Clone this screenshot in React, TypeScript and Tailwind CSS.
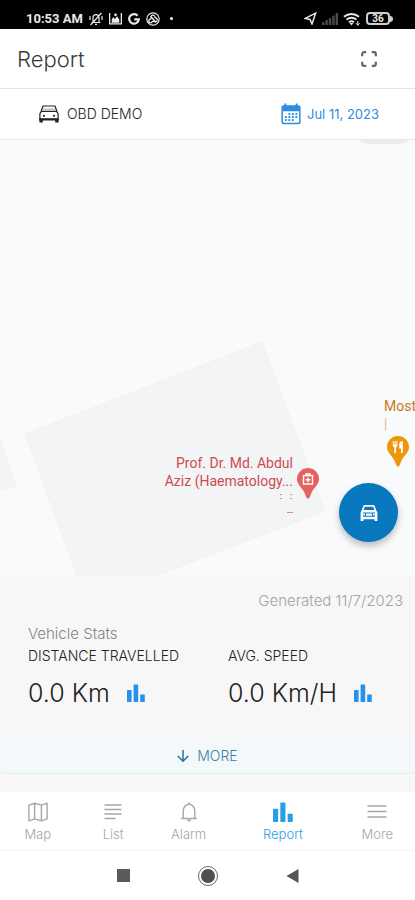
import React from 'react'

type IconProps = { className?: string }

const BarsIcon = ({ className }: IconProps) => (
  <svg viewBox="0 0 18 18" className={className} fill="currentColor" aria-hidden="true">
    <rect x="0" y="6" width="4.6" height="12" rx="0.6" />
    <rect x="6.6" y="0.5" width="4.6" height="17.5" rx="0.6" />
    <rect x="13.2" y="10.5" width="4.6" height="7.5" rx="0.6" />
  </svg>
)

const CarIcon = ({ className }: IconProps) => (
  <svg viewBox="0 0 20 18" className={className} fill="none" stroke="currentColor" aria-hidden="true">
    <path d="M2 6.600 4 1h12l2 5.600" strokeWidth="1.2" strokeLinejoin="round" />
    <path d="M3.600 4.200h12.800" strokeWidth="0.7" opacity="0.6" />
    <path d="M0.900 15V8.600l1.600-2.200h15l1.600 2.200V15z" strokeWidth="1.2" strokeLinejoin="round" />
    <path d="M0.400 14.100h19.200" strokeWidth="1.8" />
    <path d="M0.400 14h3.400v3.600H0.400zM16.200 14h3.400v3.600h-3.400z" fill="currentColor" stroke="none" />
    <circle cx="5" cy="10.800" r="1.1" fill="currentColor" stroke="none" />
    <circle cx="15" cy="10.800" r="1.1" fill="currentColor" stroke="none" />
  </svg>
)

const CarSolidIcon = ({ className }: IconProps) => (
  <svg viewBox="0 0 18 16" className={className} fill="currentColor" aria-hidden="true">
    <path
      fillRule="evenodd"
      d="M3.6 0.6Q3.9 0 4.6 0h8.8q0.7 0 1 0.6L16.6 6q0.8 0.8 0.8 2v8h-2.8v-1.8H3.4V16H0.6V8q0-1.2 0.8-2zM4.8 1.8 3.6 5h10.8l-1.2-3.2zM3 7.600v4.200h12V7.600z"
    />
    <path d="M3.200 8.400h1.800v2H3.200zM13 8.400h1.800v2H13zM6 8.400h6v2.400H6z" />
  </svg>
)

const CalendarIcon = ({ className }: IconProps) => (
  <svg viewBox="0 0 20 22" className={className} fill="currentColor" aria-hidden="true">
    <path
      fillRule="evenodd"
      d="M3.4 0.5h2V2.3h9.2V0.5h2V2.3h0.8A2.2 2.2 0 0 1 19.6 4.5V19a2.2 2.2 0 0 1-2.2 2.2H2.6A2.2 2.2 0 0 1 0.4 19V4.5A2.2 2.2 0 0 1 2.6 2.3h0.8zM1.9 8.2V18.6a1.2 1.2 0 0 0 1.2 1.2h13.8a1.2 1.2 0 0 0 1.2-1.2V8.2z"
    />
    {[11, 14, 17].map((y) =>
      [4.8, 8.3, 11.8, 15.3].map((x) =>
        (y === 11 && x === 4.8) || (y === 17 && x === 15.3) ? null : (
          <rect key={`${x}-${y}`} x={x - 0.9} y={y - 0.9} width="1.9" height="1.9" />
        ),
      ),
    )}
  </svg>
)

const FullscreenIcon = ({ className }: IconProps) => (
  <svg viewBox="0 0 16 16" className={className} fill="none" stroke="currentColor" strokeWidth="2.2" aria-hidden="true">
    <path d="M1.2 5.2V3a1.8 1.8 0 0 1 1.8-1.8h2.2M10.800 1.2H13A1.8 1.8 0 0 1 14.8 3v2.2M14.8 10.800V13a1.8 1.8 0 0 1-1.8 1.8h-2.2M5.2 14.8H3A1.8 1.8 0 0 1 1.2 13v-2.2" />
  </svg>
)

const ArrowDownIcon = ({ className }: IconProps) => (
  <svg viewBox="0 0 12 12" className={className} fill="none" stroke="currentColor" strokeWidth="1.5" aria-hidden="true">
    <path d="M6 0v11M0.8 6 6 11.2 11.2 6" />
  </svg>
)

const MapIcon = ({ className }: IconProps) => (
  <svg viewBox="0 0 20 20" className={className} fill="none" stroke="currentColor" strokeWidth="1.4" strokeLinejoin="round" aria-hidden="true">
    <path d="M0.900 3.200 6.600 1.200 13.400 3.200 19.100 1.200V16.800L13.400 18.800 6.600 16.800 0.900 18.800zM6.600 1.200V16.800M13.400 3.200V18.800" />
  </svg>
)

const ListIcon = ({ className }: IconProps) => (
  <svg viewBox="0 0 20 20" className={className} stroke="currentColor" strokeWidth="1.5" aria-hidden="true">
    <path d="M1.5 3h17M1.5 7.5h17M1.5 12h17M1.5 16.5h11" />
  </svg>
)

const BellIcon = ({ className }: IconProps) => (
  <svg viewBox="0 0 20 20" className={className} fill="none" stroke="currentColor" strokeWidth="1.4" aria-hidden="true">
    <path d="M10 0.2v2M2 16.5h16M4.2 16.5V9a5.8 6.6 0 0 1 11.6 0v7.5" />
    <path d="M8 17.6h4a2 2 0 0 1-4 0z" fill="currentColor" stroke="none" />
  </svg>
)

const MenuIcon = ({ className }: IconProps) => (
  <svg viewBox="0 0 20 20" className={className} stroke="currentColor" strokeWidth="1.5" aria-hidden="true">
    <path d="M0.5 4h19M0.5 9.5h19M0.5 15h19" />
  </svg>
)

const StatusBar = () => (
  <div className="flex h-[29px] items-center justify-between bg-black pl-[26px] pr-[22px] pt-2 text-[#e8e8e8]">
    <div className="flex items-center gap-[6px]">
      <span className="font-[Roboto,sans-serif] text-[13px] leading-4 font-bold">10:53 AM</span>
      <svg viewBox="0 0 14 14" className="size-[14px]" fill="none" stroke="currentColor" strokeWidth="1.2" aria-hidden="true">
        <path d="M4 10.5V6a3 3.4 0 0 1 6 0v4.5M2.5 10.5h9M6 12.4h2M12.5 1 1.5 13M1 4v4M13 4v4" />
      </svg>
      <svg viewBox="0 0 12 12" className="size-[13px]" aria-hidden="true">
        <path d="M0.6 1v10h10.8V1" fill="none" stroke="currentColor" strokeWidth="1.2" />
        <path d="M2.5 10V7L4 4.5l1.2 2L7.5 4 9.5 7v3z" fill="currentColor" />
        <circle cx="6" cy="2.6" r="1.3" fill="currentColor" />
      </svg>
      <svg viewBox="0 0 12 12" className="size-3" fill="none" stroke="currentColor" strokeWidth="2.2" aria-hidden="true">
        <path d="M9.6 2.7A4.8 4.8 0 1 0 10.8 6.3H6.2" />
      </svg>
      <svg viewBox="0 0 14 14" className="size-[14px]" fill="none" stroke="currentColor" strokeWidth="1.2" aria-hidden="true">
        <circle cx="7" cy="7" r="6.2" />
        <path d="M7 3.2a2 2 0 0 1 2 2.2l2 1.4a2 2 0 0 1-2 3L7 9.2l-2 1.6a2 2 0 0 1-2-3l2-1.2V5.2a2 2 0 0 1 2-2zM4.5 4l5.5 6.5" strokeWidth="1.3" />
      </svg>
      <span className="ml-1 size-[3px] rounded-full bg-white" />
    </div>
    <div className="flex items-center gap-[5px]">
      <svg viewBox="0 0 13 13" className="size-[13px]" fill="none" stroke="currentColor" strokeWidth="1.5" aria-hidden="true">
        <path d="M1.2 6.4 11.6 1.2 8 12 6 7.4z" />
      </svg>
      <svg viewBox="0 0 16 12" className="h-3 w-4 text-[#4a4a4a]" fill="currentColor" aria-hidden="true">
        <path d="M0 9h2.4v3H0zM3.4 7h2.4v5H3.4zM6.8 5h2.4v7H6.8zM10.2 2.6h2.4V12h-2.4zM13.6 0H16v12h-2.4z" />
      </svg>
      <svg viewBox="0 0 18 14" className="h-[14px] w-[18px]" fill="none" stroke="currentColor" strokeWidth="1.9" aria-hidden="true">
        <path d="M1 4.8a11.4 11.4 0 0 1 15 0M3.5 7.6a7.6 7.6 0 0 1 10 0M6 10.2a4 4 0 0 1 5 0" />
        <path d="M6.6 11h3.8l-1.9 2.4z" fill="currentColor" stroke="none" />
        <path d="M14.8 9v4.4M13 11.2l1.8 2 1.8-2" strokeWidth="1" />
      </svg>
      <span className="flex items-center">
        <span className="flex h-[13px] w-6 items-center justify-center rounded-[4px] border-2 border-[#cfcfcf] font-[Roboto,sans-serif] text-[10px] leading-none font-bold">
          36
        </span>
        <span className="h-[6px] w-[3px] rounded-r-full bg-[#cfcfcf]" />
      </span>
    </div>
  </div>
)

const PinShape = ({ className }: IconProps) => (
  <svg viewBox="0 0 22 31" className={className} fill="currentColor" aria-hidden="true">
    <path d="M11 0a11 11 0 0 1 11 11c0 5.5-4.6 8-7.4 13.4-1.2 2.4-1.8 6.2-3.6 6.2s-2.4-3.8-3.6-6.2C4.600 19 0 16.500 0 11A11 11 0 0 1 11 0z" />
  </svg>
)

const MapView = () => (
  <section aria-label="Vehicle map" className="relative min-h-[436px] flex-1 overflow-hidden bg-[#f8fafc]">
    <svg width="415" height="438" viewBox="0 0 415 438" className="absolute top-0 left-0" aria-hidden="true">
      <path d="M25 294 262 202 325 371 145 440H79z" fill="#f3f4f5" stroke="#f1f2f4" />
      <path d="M0 300 16 346 0 350z" fill="#f3f4f5" stroke="#f1f2f4" />
      <path d="M360 0h48q-3 4-8 4h-31q-6 0-9-4z" fill="#ebecee" />
    </svg>

    <p className="absolute top-[314px] left-[140px] w-[153px] text-right font-[Roboto,sans-serif] text-[14px] leading-[18px] font-normal text-[#cf4a4f]">
      Prof. Dr. Md. Abdul
      <br />
      Aziz (Haematology...
    </p>
    <svg width="16" height="24" viewBox="0 0 16 24" className="absolute top-[352px] left-[278px] text-[#dd8c8e]" fill="currentColor" aria-hidden="true">
      <path d="M2 2h2v1H2zM2 6h2v1H2zM12 2h2v1h-2zM12 6h2v1h-2zM9 20h6v1H9z" />
    </svg>
    <div className="absolute top-[328px] left-[297px] text-[#e5625e]">
      <PinShape className="h-[31px] w-[22px]" />
      <svg viewBox="0 0 12 12" className="absolute top-[5px] left-[5px] size-3" fill="none" stroke="#fff" strokeWidth="1.4" aria-hidden="true">
        <path d="M1.500 2.600h9v8.400h-9zM4 2.400V1h4v1.400M6 4.400v4.800M3.600 6.800h4.800" />
      </svg>
    </div>

    <p className="absolute top-[257px] left-[384px] font-[Roboto,sans-serif] text-[14px] leading-[18px] font-normal whitespace-nowrap text-[#c77a25]">
      Most
      <br />
      <span className="text-[#dfb988]">|</span>
    </p>
    <div className="absolute top-[296px] left-[387px] text-[#f09609]">
      <PinShape className="h-[31px] w-[22px]" />
      <svg viewBox="0 0 12 12" className="absolute top-[5px] left-[5px] size-3" fill="#fff" aria-hidden="true">
        <path d="M0.800 0h1v3.400h0.800V0h1v3.400h0.800V0h1v4.200Q5.400 6 4 6.300V12H2.200V6.300Q0.800 6 0.800 4.200zM10.800 0v12H9V7.400H7.200V3Q7.400 0 10.800 0z" />
      </svg>
    </div>

    <button
      type="button"
      aria-label="Show vehicle"
      className="absolute right-[17px] bottom-[34px] flex size-[59px] items-center justify-center rounded-full bg-[#0878be] text-white shadow-[0_4px_7px_rgba(0,0,0,0.25)]"
    >
      <CarSolidIcon className="h-4 w-[18px]" />
    </button>
  </section>
)

const stats = [
  { label: 'DISTANCE TRAVELLED', value: '0.0 Km' },
  { label: 'AVG. SPEED', value: '0.0 Km/H' },
]

const tabs = [
  { name: 'Map', icon: MapIcon, active: false },
  { name: 'List', icon: ListIcon, active: false },
  { name: 'Alarm', icon: BellIcon, active: false },
  { name: 'Report', icon: BarsIcon, active: true },
  { name: 'More', icon: MenuIcon, active: false },
]

export default function App() {
  return (
    <div className="flex min-h-screen flex-col bg-[#f7f7f7] font-[Inter,sans-serif] font-light">
      <StatusBar />

      <header className="flex h-[60px] items-center justify-between border-b border-[#e2e3e4] bg-white pr-[38px] pl-[17px]">
        <h1 className="text-[22px] leading-7 text-[#3a3a3a]">Report</h1>
        <button type="button" aria-label="Full screen" className="text-[#666]">
          <FullscreenIcon className="size-4" />
        </button>
      </header>

      <div className="flex h-[51px] items-center justify-between border-b border-[#e6e8ea] bg-white pr-9 pl-[39px]">
        <button type="button" className="flex items-center gap-2 text-[14px] leading-5 text-[#222]">
          <CarIcon className="h-[18px] w-5" />
          OBD DEMO
        </button>
        <button type="button" className="flex items-center gap-[6px] text-[13px] leading-5 font-normal text-[#2b8ee0]">
          <CalendarIcon className="h-[22px] w-5" />
          Jul 11, 2023
        </button>
      </div>

      <MapView />

      <section className="flex h-[162px] flex-col pt-[14px]">
        <p className="pr-3 text-right text-[15px] leading-[22px] text-[#a3a3a3]">Generated 11/7/2023</p>
        <h2 className="mt-[11px] px-7 text-[15px] leading-[22px] text-[#858585]">Vehicle Stats</h2>
        <dl className="grid grid-cols-[200px_1fr] px-7">
          {stats.map((stat) => (
            <div key={stat.label}>
              <dt className="text-[14px] leading-[22px] text-[#222]">{stat.label}</dt>
              <dd className="mt-2 flex items-center gap-[17px] text-[25px] leading-9 text-[#222]">
                {stat.value}
                <BarsIcon className="size-[18px] text-[#2492ea]" />
              </dd>
            </div>
          ))}
        </dl>
      </section>

      <button
        type="button"
        className="mb-[18px] flex h-9 items-center justify-center gap-2 rounded-b-md border-b border-[#e6ebef] bg-[#f3f8fb] text-[14px] text-[#3f7ea5]"
      >
        <ArrowDownIcon className="size-3 text-[#2a6f9f]" />
        MORE
      </button>

      <nav aria-label="Main" className="grid h-[59px] grid-cols-[2fr_2fr_2fr_3fr_2fr] border-b border-[#f5f5f5] bg-white">
        {tabs.map(({ name, icon: Icon, active }) => (
          <a
            key={name}
            href={`#${name.toLowerCase()}`}
            className={`flex flex-col items-center gap-1 pt-[10px] text-[13px] leading-4 ${
              active ? 'text-[#27a0e8]' : 'text-[#a6a6a6]'
            }`}
          >
            <Icon className="size-5" />
            {name}
          </a>
        ))}
      </nav>

      <div className="flex h-[49px] items-center justify-center gap-[68px] bg-white text-[#555]">
        <button type="button" aria-label="Recent apps" className="size-[13px] bg-[#5a5a5a]" />
        <button type="button" aria-label="Home" className="flex size-5 items-center justify-center rounded-full border border-[#666]">
          <span className="size-[14px] rounded-full bg-[#505050]" />
        </button>
        <button type="button" aria-label="Back">
          <svg viewBox="0 0 13 14" className="h-[14px] w-[13px]" fill="currentColor" aria-hidden="true">
            <path d="M12.500 0v14L0.500 7z" />
          </svg>
        </button>
      </div>
    </div>
  )
}
